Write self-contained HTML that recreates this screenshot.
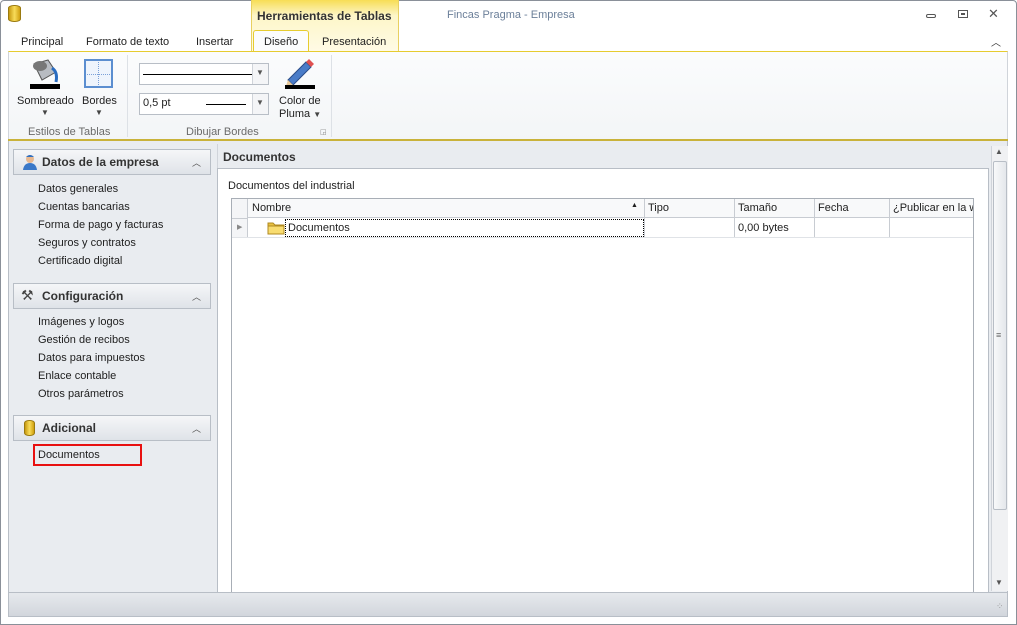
<!DOCTYPE html>
<html><head><meta charset="utf-8"><style>
*{margin:0;padding:0;box-sizing:border-box}
body{width:1017px;height:625px;overflow:hidden;font-family:"Liberation Sans",sans-serif;font-size:11px;color:#1e1e1e;background:#fff;position:relative}
.a{position:absolute}
.t{position:absolute;white-space:nowrap}
</style></head><body>
<div class="a" style="left:0;top:0;width:1017px;height:625px;border:1px solid #8a9099;border-radius:4px 4px 0 0;background:#fff"></div>
<div class="a" style="left:8px;top:5px;width:13px;height:17px;background:linear-gradient(90deg,#c89a10,#f8dc5a 50%,#d0a010);border-radius:6px/3px;border:1px solid #9a7a10"></div>
<div class="a" style="left:251px;top:0;width:148px;height:52px;background:linear-gradient(#f7dd55,#fdf6c8 30%,#fffbe6);border-left:1px solid #e8d060;border-right:1px solid #e8d060"></div>
<div class="t" style="left:257px;top:9px;font-weight:bold;font-size:12px;color:#333">Herramientas de Tablas</div>
<div class="t" style="left:447px;top:9px;color:#6b7f99">Fincas Pragma - Empresa</div>
<div class="a" style="left:926px;top:14px;width:10px;height:4px;border:1px solid #555;border-radius:2px"></div>
<div class="a" style="left:958px;top:10px;width:10px;height:8px;border:1px solid #555"></div>
<div class="a" style="left:961px;top:13px;width:4px;height:2px;border:1px solid #555"></div>
<div class="t" style="left:988px;top:6px;font-size:13px;color:#555">✕</div>
<div class="t" style="left:991px;top:34px;font-size:10px;color:#333">︿</div>
<div class="t" style="left:21px;top:36px">Principal</div>
<div class="t" style="left:86px;top:36px">Formato de texto</div>
<div class="t" style="left:196px;top:36px">Insertar</div>
<div class="a" style="left:253px;top:30px;width:56px;height:22px;background:#fbfcfd;border:1px solid #e6cc30;border-bottom:none;border-radius:3px 3px 0 0"></div>
<div class="t" style="left:264px;top:36px">Diseño</div>
<div class="t" style="left:322px;top:36px">Presentación</div>
<div class="a" style="left:8px;top:51px;width:1000px;height:89px;background:linear-gradient(#fbfcfd,#f3f5f7);border-top:1px solid #e6cc30;border-left:1px solid #d0d4da;border-right:1px solid #d0d4da"></div>
<div class="a" style="left:8px;top:139px;width:1000px;height:2px;background:#c9b23a"></div>
<div class="a" style="left:127px;top:55px;width:1px;height:82px;background:#dde1e6"></div>
<div class="a" style="left:331px;top:55px;width:1px;height:82px;background:#dde1e6"></div>
<svg class="a" style="left:28px;top:58px" width="34" height="32"><path d="M6 6 L20 2 L28 14 L14 22 Z" fill="#b8bcc2" stroke="#555"/><ellipse cx="12" cy="8" rx="7" ry="5" fill="#777"/><path d="M24 10 Q30 14 28 24" stroke="#2a6cc0" stroke-width="3" fill="none"/><rect x="2" y="26" width="30" height="5" fill="#000"/></svg>
<div class="t" style="left:17px;top:95px">Sombreado</div>
<div class="t" style="left:41px;top:108px;font-size:8px;color:#444">▼</div>
<div class="a" style="left:84px;top:59px;width:29px;height:29px;border:2px solid #5b8ed0;background:#eef4fc"></div>
<div class="a" style="left:98px;top:62px;width:0;height:23px;border-left:1px dotted #7aa0d8"></div>
<div class="a" style="left:87px;top:74px;width:23px;height:0;border-top:1px dotted #7aa0d8"></div>
<div class="t" style="left:82px;top:95px">Bordes</div>
<div class="t" style="left:95px;top:108px;font-size:8px;color:#444">▼</div>
<div class="t" style="left:28px;top:126px;color:#6a6a6a">Estilos de Tablas</div>
<div class="a" style="left:139px;top:63px;width:130px;height:22px;border:1px solid #b8bec6;background:#fff"></div>
<div class="a" style="left:143px;top:74px;width:109px;height:1px;background:#000"></div>
<div class="a" style="left:252px;top:64px;width:16px;height:20px;border-left:1px solid #d0d4da;background:#f4f5f7"></div>
<div class="t" style="left:256px;top:68px;font-size:8px;color:#555">▼</div>
<div class="a" style="left:139px;top:93px;width:130px;height:22px;border:1px solid #b8bec6;background:#fff"></div>
<div class="t" style="left:143px;top:97px">0,5 pt</div>
<div class="a" style="left:206px;top:104px;width:40px;height:1px;background:#000"></div>
<div class="a" style="left:252px;top:94px;width:16px;height:20px;border-left:1px solid #d0d4da;background:#f4f5f7"></div>
<div class="t" style="left:256px;top:98px;font-size:8px;color:#555">▼</div>
<svg class="a" style="left:284px;top:58px" width="32" height="32"><path d="M4 22 L22 4 L27 9 L9 27 Z" fill="#4a7cc8" stroke="#2a4c88"/><path d="M22 4 L25 1 L30 6 L27 9 Z" fill="#e05050"/><path d="M4 22 L2 28 L9 27 Z" fill="#e8c898"/><rect x="1" y="27" width="30" height="4" fill="#000"/></svg>
<div class="t" style="left:279px;top:95px">Color de</div>
<div class="t" style="left:279px;top:108px">Pluma <span style="font-size:8px;color:#444">▼</span></div>
<div class="t" style="left:186px;top:126px;color:#6a6a6a">Dibujar Bordes</div>
<div class="t" style="left:320px;top:128px;font-size:7px;color:#888">◲</div>
<div class="a" style="left:8px;top:141px;width:1000px;height:451px;background:#e9ecf0;border-left:1px solid #b8bec6;border-right:1px solid #b8bec6"></div>
<div class="a" style="left:10px;top:144px;width:208px;height:448px;background:#e9ecf0;border-right:1px solid #d0d4da"></div>
<div class="a" style="left:13px;top:149px;width:198px;height:26px;background:linear-gradient(#f5f6f8,#dfe3e8);border:1px solid #b8bec6"></div>
<svg class="a" style="left:22px;top:154px" width="16" height="16"><circle cx="8" cy="5" r="4" fill="#e8b890"/><path d="M4 3 Q8 -1 12 3 Z" fill="#3070c0"/><path d="M1 16 Q2 9 8 9 Q14 9 15 16 Z" fill="#3a78c8"/></svg>
<div class="t" style="left:42px;top:155px;font-weight:bold;font-size:12px;color:#333">Datos de la empresa</div>
<div class="t" style="left:192px;top:156px;font-size:9px;color:#555">︿</div>
<div class="t" style="left:38px;top:183px">Datos generales</div>
<div class="t" style="left:38px;top:201px">Cuentas bancarias</div>
<div class="t" style="left:38px;top:219px">Forma de pago y facturas</div>
<div class="t" style="left:38px;top:237px">Seguros y contratos</div>
<div class="t" style="left:38px;top:255px">Certificado digital</div>
<div class="a" style="left:13px;top:283px;width:198px;height:26px;background:linear-gradient(#f5f6f8,#dfe3e8);border:1px solid #b8bec6"></div>
<div class="t" style="left:21px;top:287px;font-size:14px;color:#444">⚒</div>
<div class="t" style="left:42px;top:289px;font-weight:bold;font-size:12px;color:#333">Configuración</div>
<div class="t" style="left:192px;top:290px;font-size:9px;color:#555">︿</div>
<div class="t" style="left:38px;top:316px">Imágenes y logos</div>
<div class="t" style="left:38px;top:334px">Gestión de recibos</div>
<div class="t" style="left:38px;top:352px">Datos para impuestos</div>
<div class="t" style="left:38px;top:370px">Enlace contable</div>
<div class="t" style="left:38px;top:388px">Otros parámetros</div>
<div class="a" style="left:13px;top:415px;width:198px;height:26px;background:linear-gradient(#f5f6f8,#dfe3e8);border:1px solid #b8bec6"></div>
<div class="a" style="left:24px;top:420px;width:11px;height:16px;background:linear-gradient(90deg,#c89a10,#f8dc5a 50%,#d0a010);border-radius:5px/3px;border:1px solid #9a7a10"></div>
<div class="t" style="left:42px;top:421px;font-weight:bold;font-size:12px;color:#333">Adicional</div>
<div class="t" style="left:192px;top:422px;font-size:9px;color:#555">︿</div>
<div class="a" style="left:33px;top:444px;width:109px;height:22px;border:2px solid #e81010"></div>
<div class="t" style="left:38px;top:449px">Documentos</div>
<div class="t" style="left:223px;top:150px;font-weight:bold;font-size:12px;color:#333">Documentos</div>
<div class="a" style="left:217px;top:168px;width:772px;height:424px;background:#fff;border:1px solid #b8bec6;border-bottom:none"></div>
<div class="t" style="left:228px;top:180px">Documentos del industrial</div>
<div class="a" style="left:231px;top:198px;width:743px;height:394px;border:1px solid #a8aeb6;border-bottom:none;background:#fff"></div>
<div class="a" style="left:232px;top:199px;width:741px;height:19px;background:#f8f9fa;border-bottom:1px solid #c8ccd2"></div>
<div class="a" style="left:232px;top:199px;width:16px;height:38px;background:#f4f5f7;border-right:1px solid #c8ccd2"></div>
<div class="a" style="left:232px;top:237px;width:741px;height:1px;background:#e0e3e7"></div>
<div class="a" style="left:232px;top:218px;width:16px;height:1px;background:#c8ccd2"></div>
<div class="a" style="left:644px;top:199px;width:1px;height:38px;background:#c8ccd2"></div>
<div class="a" style="left:734px;top:199px;width:1px;height:38px;background:#c8ccd2"></div>
<div class="a" style="left:814px;top:199px;width:1px;height:38px;background:#c8ccd2"></div>
<div class="a" style="left:889px;top:199px;width:1px;height:38px;background:#c8ccd2"></div>
<div class="t" style="left:252px;top:202px">Nombre</div>
<div class="t" style="left:631px;top:202px;font-size:7px">▲</div>
<div class="t" style="left:648px;top:202px">Tipo</div>
<div class="t" style="left:738px;top:202px">Tamaño</div>
<div class="t" style="left:818px;top:202px">Fecha</div>
<div class="a" style="left:893px;top:202px;width:80px;overflow:hidden;white-space:nowrap">¿Publicar en la web?</div>
<div class="t" style="left:237px;top:223px;font-size:7px;color:#888">▶</div>
<svg class="a" style="left:267px;top:221px" width="18" height="14"><path d="M1 2 H6 L8 4 H17 V13 H1 Z" fill="#e8c040" stroke="#b08a20"/><rect x="1" y="5" width="16" height="8" fill="#f8dc70" stroke="#b08a20"/></svg>
<div class="a" style="left:285px;top:219px;width:359px;height:18px;border:1px dotted #000"></div>
<div class="t" style="left:288px;top:222px">Documentos</div>
<div class="t" style="left:738px;top:222px">0,00 bytes</div>
<div class="a" style="left:991px;top:146px;width:17px;height:445px;background:#f0f1f3;border-left:1px solid #d0d4da"></div>
<div class="t" style="left:995px;top:147px;font-size:8px;color:#555">▲</div>
<div class="a" style="left:993px;top:161px;width:14px;height:349px;background:linear-gradient(90deg,#f8f9fa,#e4e7eb);border:1px solid #b8bec6;border-radius:2px"></div>
<div class="t" style="left:996px;top:330px;font-size:9px;color:#666">≡</div>
<div class="t" style="left:995px;top:578px;font-size:8px;color:#555">▼</div>
<div class="a" style="left:8px;top:592px;width:1000px;height:25px;background:linear-gradient(#e6e9ed,#d2d6dc);border:1px solid #b8bec6"></div>
<div class="t" style="left:996px;top:601px;font-size:9px;color:#999;letter-spacing:-1px">⁘</div>
</body></html>
